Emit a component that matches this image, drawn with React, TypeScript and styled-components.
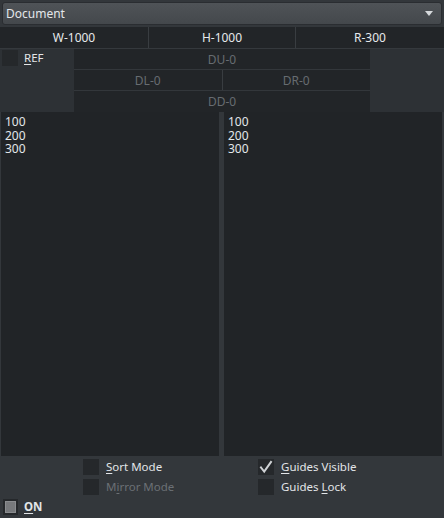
import React from "react";
import styled, { createGlobalStyle } from "styled-components";

const Global = createGlobalStyle`
  html, body { margin: 0; padding: 0; background: #33373b; }
  body { font-family: "Noto Sans", "Open Sans", sans-serif; font-size: 11.5px; color: #dfe3e6; }
  * { box-sizing: border-box; }
`;

const Page = styled.div`
  width: 444px;
  height: 518px;
  background: #33373b;
  display: flex;
  flex-direction: column;
  overflow: hidden;
`;

const Dropdown = styled.div`
  margin: 2px 2px 0 2px;
  height: 23px;
  border: 1px solid #2a2d31;
  border-radius: 3px;
  background: linear-gradient(#4f5357, #44484c);
  display: flex;
  align-items: center;
  justify-content: space-between;
  padding: 0 8px 0 3px;
  color: #e4e7ea;
  font-size: 12px;
`;

const Arrow = styled.span`
  width: 0;
  height: 0;
  border-left: 4px solid transparent;
  border-right: 4px solid transparent;
  border-top: 5px solid #d6d9dc;
`;

const HeaderRow = styled.div`
  margin-top: 2px;
  height: 22px;
  display: grid;
  grid-template-columns: 148px 1px 146px 1px 1fr;
  background: #222528;
  border-bottom: 1px solid #35393d;
`;

const HeaderCell = styled.div`
  display: flex;
  align-items: center;
  justify-content: center;
  color: #e6e9ec;
  font-size: 12px;
`;

const VLine = styled.div`
  background: #393d41;
`;

const RefSection = styled.div`
  height: 63px;
  display: grid;
  grid-template-columns: 74px 296px 1fr;
  background: #2d3135;
`;

const RefLabel = styled.label`
  display: flex;
  align-items: flex-start;
  gap: 6px;
  padding: 1px 0 0 2px;
  color: #e2e5e8;
`;

const Box = styled.span`
  width: 16px;
  height: 16px;
  flex: none;
  background: #25282b;
  display: flex;
  align-items: center;
  justify-content: center;
`;

const LabelText = styled.span<{ $disabled?: boolean; $bold?: boolean }>`
  color: ${(p) => (p.$disabled ? "#6b7075" : "#e2e5e8")};
  font-weight: ${(p) => (p.$bold ? 700 : 400)};
  line-height: 16px;
  u { text-decoration-thickness: 1px; text-underline-offset: 2px; }
`;

const MarginGrid = styled.div`
  display: grid;
  grid-template-columns: 1fr 1px 1fr;
  grid-template-rows: 20px 1px 20px 1px 20px;
  background: #222528;
`;

const MarginCell = styled.div<{ $span?: boolean }>`
  grid-column: ${(p) => (p.$span ? "1 / 4" : "auto")};
  display: flex;
  align-items: center;
  justify-content: center;
  color: #676c71;
  font-size: 12px;
`;

const HLine = styled.div`
  grid-column: 1 / 4;
  background: #33373b;
`;

const Editors = styled.div`
  height: 344px;
  display: grid;
  grid-template-columns: 218px 218px;
  column-gap: 5px;
  padding: 0 0 0 1px;
`;

const Editor = styled.div`
  background: #212427;
  padding: 3px 4px;
  font-size: 12px;
  line-height: 13.5px;
  color: #e3e7ea;
`;

const Options = styled.div`
  margin-top: 3px;
  display: grid;
  grid-template-columns: 175px 175px;
  row-gap: 4px;
  padding-left: 83px;
`;

const Option = styled.label`
  display: flex;
  align-items: center;
  gap: 7px;
`;

const OnRow = styled.label`
  margin-top: 4px;
  display: flex;
  align-items: center;
  gap: 6px;
  padding-left: 3px;
`;

const OnBox = styled.span`
  width: 15px;
  height: 16px;
  background: #25282b;
  padding: 2px;
  display: flex;
`;

const OnInner = styled.span`
  flex: 1;
  background: #77797c;
  border: 1px solid #8a8c8f;
`;

const Check = () => (
  <svg width="14" height="14" viewBox="0 0 14 14">
    <path d="M2 7.5 L5.2 11.5 L12 2" fill="none" stroke="#cfd2d5" strokeWidth="2" strokeLinecap="square" />
  </svg>
);

export default function App() {
  return (
    <Page>
      <Global />
      <Dropdown>
        <span>Document</span>
        <Arrow />
      </Dropdown>
      <HeaderRow>
        <HeaderCell>W-1000</HeaderCell>
        <VLine />
        <HeaderCell>H-1000</HeaderCell>
        <VLine />
        <HeaderCell>R-300</HeaderCell>
      </HeaderRow>
      <RefSection>
        <RefLabel>
          <Box />
          <LabelText>
            <u>R</u>EF
          </LabelText>
        </RefLabel>
        <MarginGrid>
          <MarginCell $span>DU-0</MarginCell>
          <HLine />
          <MarginCell>DL-0</MarginCell>
          <VLine />
          <MarginCell>DR-0</MarginCell>
          <HLine />
          <MarginCell $span>DD-0</MarginCell>
        </MarginGrid>
        <div />
      </RefSection>
      <Editors>
        <Editor>
          100
          <br />
          200
          <br />
          300
        </Editor>
        <Editor>
          100
          <br />
          200
          <br />
          300
        </Editor>
      </Editors>
      <Options>
        <Option>
          <Box />
          <LabelText>
            <u>S</u>ort Mode
          </LabelText>
        </Option>
        <Option>
          <Box>
            <Check />
          </Box>
          <LabelText>
            <u>G</u>uides Visible
          </LabelText>
        </Option>
        <Option>
          <Box />
          <LabelText $disabled>
            M<u>i</u>rror Mode
          </LabelText>
        </Option>
        <Option>
          <Box />
          <LabelText>
            Guides <u>L</u>ock
          </LabelText>
        </Option>
      </Options>
      <OnRow>
        <OnBox>
          <OnInner />
        </OnBox>
        <LabelText $bold>
          <u>O</u>N
        </LabelText>
      </OnRow>
    </Page>
  );
}
